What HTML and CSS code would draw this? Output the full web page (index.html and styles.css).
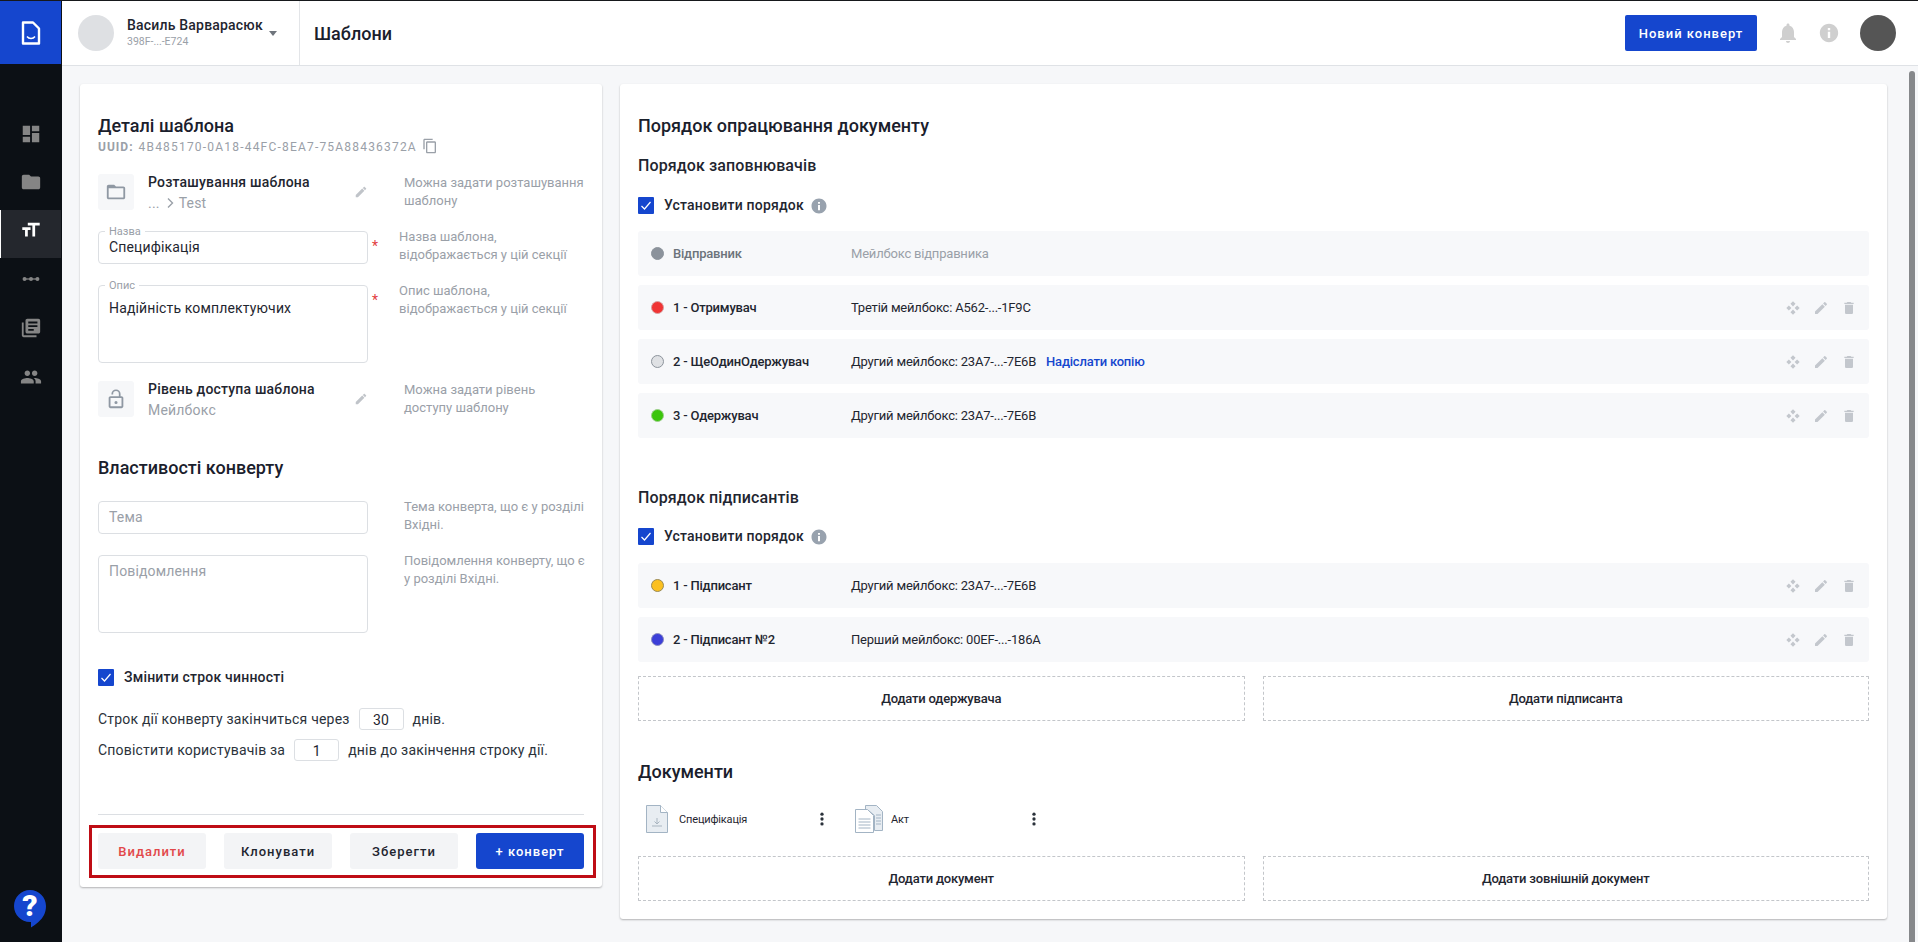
FILE: index.html
```html
<!DOCTYPE html>
<html lang="uk">
<head>
<meta charset="utf-8">
<title>Шаблони</title>
<link rel="stylesheet" href="styles.css">
</head>
<body>
<svg class="defs" width="0" height="0" aria-hidden="true">
  <symbol id="i-edit" viewBox="0 0 24 24"><path d="M3 17.25V21h3.75L17.81 9.94l-3.75-3.75L3 17.25zM20.71 7.04c.39-.39.39-1.02 0-1.41l-2.34-2.34c-.39-.39-1.02-.39-1.41 0l-1.83 1.83 3.75 3.75 1.83-1.83z"/></symbol>
  <symbol id="i-delete" viewBox="0 0 24 24"><path d="M6 19c0 1.1.9 2 2 2h8c1.1 0 2-.9 2-2V7H6v12zM19 4h-3.5l-1-1h-5l-1 1H5v2h14V4z"/></symbol>
  <symbol id="i-move" viewBox="0 0 24 24"><path d="M12 2l3.800 3.800L12 9.600 8.200 5.800zM12 14.400l3.800 3.800L12 22l-3.800-3.800zM5.800 8.200L9.600 12l-3.800 3.800L2 12zM18.200 8.200L22 12l-3.800 3.800L14.400 12z"/></symbol>
  <symbol id="i-info" viewBox="0 0 24 24"><path d="M12 2C6.480 2 2 6.480 2 12s4.480 10 10 10 10-4.480 10-10S17.520 2 12 2zm1.300 15.500h-2.600v-6.800h2.600v6.800zm0-8.600h-2.600V6.500h2.600v2.400z"/></symbol>
  <symbol id="i-more" viewBox="0 0 24 24"><circle cx="12" cy="5.500" r="2.200"/><circle cx="12" cy="12" r="2.200"/><circle cx="12" cy="18.500" r="2.200"/></symbol>
  <symbol id="i-check" viewBox="0 0 16 16"><path d="M3.500 8.500l3 3 6-7" fill="none" stroke="#fff" stroke-width="1.200"/></symbol>
</svg>

<div class="app">
  <nav class="sidebar">
    <a class="logo">
      <svg width="24" height="28" viewBox="0 0 24 28"><path d="M4 3.500h10l6 6v15H4z" fill="none" stroke="#fff" stroke-width="2.400" stroke-linejoin="round"/><path d="M8 17.500c2 2.600 6 2.600 8 0" fill="none" stroke="#fff" stroke-width="1.500"/></svg>
    </a>
    <ul class="nav-list">
      <li class="nav-item"><svg class="nav-icon" viewBox="0 0 24 24"><path d="M3 13h8V3H3v10zm0 8h8v-6H3v6zm10 0h8V11h-8v10zm0-18v6h8V3h-8z"/></svg></li>
      <li class="nav-item"><svg class="nav-icon" viewBox="0 0 24 24"><path d="M10 4H4c-1.100 0-1.990.9-1.990 2L2 18c0 1.100.9 2 2 2h16c1.100 0 2-.9 2-2V8c0-1.100-.9-2-2-2h-8l-2-2z"/></svg></li>
      <li class="nav-item nav-active"><svg class="nav-icon" viewBox="0 0 24 24"><path fill="#fff" d="M21.500 4v3h-5v12h-3V7h-5V4h13zm-19 5h9v3h-3v7h-3v-7h-3V9z"/></svg></li>
      <li class="nav-item"><svg class="nav-icon" viewBox="0 0 24 24"><circle cx="5" cy="12" r="2.200"/><circle cx="12" cy="12" r="2.200"/><circle cx="19" cy="12" r="2.200"/><path d="M5 11.300h14v1.400H5z"/></svg></li>
      <li class="nav-item"><svg class="nav-icon" viewBox="0 0 24 24"><path d="M4 6H2v14c0 1.100.9 2 2 2h14v-2H4V6zm16-4H8c-1.100 0-2 .9-2 2v12c0 1.100.9 2 2 2h12c1.100 0 2-.9 2-2V4c0-1.100-.9-2-2-2zm-1 9H9V9h10v2zm-4 4H9v-2h6v2zm4-8H9V5h10v2z"/></svg></li>
      <li class="nav-item"><svg class="nav-icon" viewBox="0 0 24 24"><path d="M16 11c1.660 0 2.990-1.340 2.990-3S17.660 5 16 5c-1.660 0-3 1.340-3 3s1.340 3 3 3zm-8 0c1.660 0 2.990-1.340 2.990-3S9.660 5 8 5C6.340 5 5 6.340 5 8s1.340 3 3 3zm0 2c-2.330 0-7 1.170-7 3.500V19h14v-2.500c0-2.330-4.670-3.500-7-3.500zm8 0c-.29 0-.62.02-.97.05 1.160.84 1.970 1.970 1.970 3.450V19h6v-2.500c0-2.330-4.670-3.500-7-3.500z"/></svg></li>
    </ul>
    <a class="help-bubble">
      <svg class="help-shape" width="32" height="38" viewBox="0 0 32 38"><path d="M16 0C7.200 0 0 7.200 0 16s7.200 16 16 16h1v5.500c5-3 10.500-7.500 13-12.500 1.300-2.700 2-5.800 2-9C32 7.200 24.800 0 16 0z" fill="#1546ce"/></svg>
      <span class="help-mark">?</span>
    </a>
  </nav>

  <div class="main">
    <header class="topbar">
      <div class="account">
        <span class="account-avatar"></span>
        <div class="account-text">
          <div class="account-name">Василь Варварасюк</div>
          <div class="account-id">398F-...-E724</div>
        </div>
        <span class="caret"></span>
      </div>
      <h1 class="page-title">Шаблони</h1>
      <button class="btn-primary btn-new">Новий конверт</button>
      <svg class="top-icon bell" viewBox="0 0 24 24"><path d="M12 22c1.100 0 2-.9 2-2h-4c0 1.100.89 2 2 2zm6-6v-5c0-3.070-1.640-5.640-4.500-6.320V4c0-.83-.67-1.500-1.500-1.500s-1.500.67-1.500 1.500v.68C7.630 5.360 6 7.920 6 11v5l-2 2v1h16v-1l-2-2z"/></svg>
      <svg class="top-icon info-top"><use href="#i-info"/></svg>
      <span class="user-avatar"></span>
    </header>

    <div class="content">
      <section class="card card-left">
        <h2 class="card-title">Деталі шаблона</h2>
        <div class="uuid"><b>UUID:</b><span>4B485170-0A18-44FC-8EA7-75A88436372A</span><svg class="copy-icon" viewBox="0 0 24 24"><path d="M16 1H4c-1.100 0-2 .9-2 2v14h2V3h12V1zm3 4H8c-1.100 0-2 .9-2 2v14c0 1.100.9 2 2 2h11c1.100 0 2-.9 2-2V7c0-1.100-.9-2-2-2zm0 16H8V7h11v14z"/></svg></div>

        <div class="info-row row-location">
          <span class="square-icon"><svg viewBox="0 0 24 24"><path d="M20 6h-8l-2-2H4c-1.100 0-1.990.9-1.990 2L2 18c0 1.100.9 2 2 2h16c1.100 0 2-.9 2-2V8c0-1.100-.9-2-2-2zm0 12H4V8h16v10z"/></svg></span>
          <div class="info-text">
            <div class="info-title">Розташування шаблона</div>
            <div class="info-sub"><span class="crumb">...</span><svg class="crumb-sep" viewBox="0 0 8 12"><path d="M2 1.500L6.500 6 2 10.500" fill="none" stroke="#9aa0a8" stroke-width="1.400"/></svg><span>Test</span></div>
          </div>
          <svg class="pen-left"><use href="#i-edit"/></svg>
          <p class="hint hint-wide">Можна задати розташування шаблону</p>
        </div>

        <div class="field-row row-name">
          <div class="field field-input"><span class="field-label">Назва</span><span class="field-value">Специфікація</span></div>
          <span class="star">*</span>
          <p class="hint">Назва шаблона, відображається у цій секції</p>
        </div>

        <div class="field-row row-desc">
          <div class="field field-area"><span class="field-label">Опис</span><span class="field-value">Надійність комплектуючих</span></div>
          <span class="star">*</span>
          <p class="hint">Опис шаблона, відображається у цій секції</p>
        </div>

        <div class="info-row row-access">
          <span class="square-icon"><svg viewBox="0 0 24 24"><path d="M12 17.500a1.700 1.700 0 1 0 0-3.400 1.700 1.700 0 0 0 0 3.400zM18 9h-1V6.500a5 5 0 0 0-10 0V7h1.900v-.5a3.100 3.100 0 0 1 6.200 0V9H6c-1.100 0-2 .9-2 2v9c0 1.100.9 2 2 2h12c1.100 0 2-.9 2-2v-9c0-1.100-.9-2-2-2zm0 11H6v-9h12v9z"/></svg></span>
          <div class="info-text">
            <div class="info-title">Рівень доступа шаблона</div>
            <div class="info-sub">Мейлбокс</div>
          </div>
          <svg class="pen-left"><use href="#i-edit"/></svg>
          <p class="hint hint-wide">Можна задати рівень доступу шаблону</p>
        </div>

        <h2 class="card-title title-props">Властивості конверту</h2>

        <div class="field-row row-subject">
          <div class="field field-input"><span class="field-placeholder">Тема</span></div>
          <p class="hint hint-far">Тема конверта, що є у розділі Вхідні.</p>
        </div>
        <div class="field-row row-message">
          <div class="field field-area"><span class="field-placeholder">Повідомлення</span></div>
          <p class="hint hint-far">Повідомлення конверту, що є у розділі Вхідні.</p>
        </div>

        <label class="check-row row-expire"><span class="checkbox"><svg><use href="#i-check"/></svg></span><span class="check-label">Змінити строк чинності</span></label>
        <div class="term-line term-first"><span>Строк дії конверту закінчиться через</span><span class="num-box">30</span><span>днів.</span></div>
        <div class="term-line"><span>Сповістити користувачів за</span><span class="num-box">1</span><span>днів до закінчення строку дії.</span></div>

        <hr class="divider">
        <div class="actions">
          <button class="btn btn-danger">Видалити</button>
          <button class="btn">Клонувати</button>
          <button class="btn">Зберегти</button>
          <button class="btn btn-primary">+ конверт</button>
        </div>
      </section>

      <section class="card card-right">
        <h2 class="card-title">Порядок опрацювання документу</h2>
        <h3 class="sub-title">Порядок заповнювачів</h3>
        <label class="check-row order-check"><span class="checkbox"><svg><use href="#i-check"/></svg></span><span class="check-label">Установити порядок</span><svg class="order-info"><use href="#i-info"/></svg></label>
        <ul class="party-list">
          <li class="party party-muted"><span class="dot dot-gray"></span><span class="party-name">Відправник</span><span class="party-box">Мейлбокс відправника</span></li>
          <li class="party"><span class="dot dot-red"></span><span class="party-name">1 - Отримувач</span><span class="party-box">Третій мейлбокс: A562-...-1F9C</span><span class="tools"><svg><use href="#i-move"/></svg><svg><use href="#i-edit"/></svg><svg><use href="#i-delete"/></svg></span></li>
          <li class="party"><span class="dot dot-light"></span><span class="party-name">2 - ЩеОдинОдержувач</span><span class="party-box">Другий мейлбокс: 23A7-...-7E6B</span><a class="party-link">Надіслати копію</a><span class="tools"><svg><use href="#i-move"/></svg><svg><use href="#i-edit"/></svg><svg><use href="#i-delete"/></svg></span></li>
          <li class="party"><span class="dot dot-green"></span><span class="party-name">3 - Одержувач</span><span class="party-box">Другий мейлбокс: 23A7-...-7E6B</span><span class="tools"><svg><use href="#i-move"/></svg><svg><use href="#i-edit"/></svg><svg><use href="#i-delete"/></svg></span></li>
        </ul>

        <h3 class="sub-title title-signers">Порядок підписантів</h3>
        <label class="check-row order-check"><span class="checkbox"><svg><use href="#i-check"/></svg></span><span class="check-label">Установити порядок</span><svg class="order-info"><use href="#i-info"/></svg></label>
        <ul class="party-list party-list-signers">
          <li class="party"><span class="dot dot-yellow"></span><span class="party-name">1 - Підписант</span><span class="party-box">Другий мейлбокс: 23A7-...-7E6B</span><span class="tools"><svg><use href="#i-move"/></svg><svg><use href="#i-edit"/></svg><svg><use href="#i-delete"/></svg></span></li>
          <li class="party"><span class="dot dot-blue"></span><span class="party-name">2 - Підписант №2</span><span class="party-box">Перший мейлбокс: 00EF-...-186A</span><span class="tools"><svg><use href="#i-move"/></svg><svg><use href="#i-edit"/></svg><svg><use href="#i-delete"/></svg></span></li>
        </ul>
        <div class="dashed-row dashed-people">
          <div class="dashed">Додати одержувача</div>
          <div class="dashed">Додати підписанта</div>
        </div>

        <h2 class="card-title title-docs">Документи</h2>
        <div class="doc-list">
          <div class="doc">
            <svg class="doc-icon" width="28" height="28" viewBox="0 0 28 28"><path d="M3.500.5h14l7 7v20h-21z" fill="#e8edf2" stroke="#a3b4c4"/><path d="M17.500.5v7h7" fill="#fff" stroke="#a3b4c4"/><path d="M14 13v6m-2.500-2.500L14 19l2.500-2.500M9 21h10" fill="none" stroke="#a9b5c0"/></svg>
            <span class="doc-name">Специфікація</span>
            <svg class="doc-more"><use href="#i-more"/></svg>
          </div>
          <div class="doc">
            <svg class="doc-icon" width="28" height="28" viewBox="0 0 28 28"><path d="M10.500.5h11l6 6v19h-8v-15l-6-5h-3z" fill="#e8edf2" stroke="#a3b4c4"/><path d="M.5 4.500h12l6 6v17H.5z" fill="#fff" stroke="#a3b4c4"/><path d="M3.500 14h12M3.500 17h12M3.500 20h12M3.500 23h12M21 10h5M21 13h5M21 16h5M21 19h5" stroke="#a3b4c4"/></svg>
            <span class="doc-name">Акт</span>
            <svg class="doc-more"><use href="#i-more"/></svg>
          </div>
        </div>
        <div class="dashed-row">
          <div class="dashed">Додати документ</div>
          <div class="dashed">Додати зовнішній документ</div>
        </div>
      </section>
      <span class="scroll-thumb"></span>
    </div>
  </div>
</div>
</body>
</html>
```

FILE: styles.css
```css
* { box-sizing: border-box; }
html, body { height: 100%; }
body {
  margin: 0;
  overflow: hidden;
  border-top: 1px solid #16181b;
  background: #f6f7f9;
  color: #1a202c;
  font-family: Roboto, "Noto Sans", sans-serif;
  font-size: 13px;
}
h1, h2, h3, p, ul { margin: 0; padding: 0; }
ul { list-style: none; }
button { font-family: inherit; border: 0; cursor: pointer; }
.defs { position: absolute; }

.app { display: flex; height: 941px; }

/* sidebar */
.sidebar {
  width: 62px;
  flex: none;
  display: flex;
  flex-direction: column;
  background: #0c1015;
  position: relative;
}
.logo {
  width: 61px;
  height: 63px;
  background: #1546ce;
  display: flex;
  align-items: center;
  justify-content: center;
}
.nav-list { margin-top: 46px; }
.nav-item {
  width: 61px;
  height: 48px;
  display: flex;
  align-items: center;
  justify-content: center;
}
.nav-icon { width: 22px; height: 22px; fill: #858585; }
.nav-active {
  margin-top: 4px;
  padding-bottom: 8px;
  background: #24272d;
  border-left: 1px solid #fff;
}
.nav-active ~ .nav-item { margin-top: 1px; }
.nav-active + .nav-item { margin-top: -3px; }
.help-bubble {
  position: absolute;
  left: 14px;
  top: 889px;
  width: 32px;
  height: 38px;
}
.help-shape { display: block; }
.help-mark {
  position: absolute;
  left: 0;
  right: 0;
  top: 1px;
  text-align: center;
  color: #fff;
  font-size: 30px;
  line-height: 30px;
  font-weight: 900;
}

/* top bar */
.main { flex: 1; min-width: 0; display: flex; flex-direction: column; }
.topbar {
  height: 65px;
  flex: none;
  background: #fff;
  border-bottom: 1px solid #dfe2e6;
  display: flex;
  align-items: center;
}
.account {
  width: 238px;
  height: 64px;
  flex: none;
  display: flex;
  align-items: center;
  padding-left: 16px;
  border-right: 1px solid #e3e5e8;
}
.account-avatar {
  width: 36px;
  height: 36px;
  border-radius: 50%;
  background: #dee0e3;
  flex: none;
}
.account-text { margin: -2px 0 0 13px; }
.account-name { font-size: 14px; font-weight: 500; line-height: 18px; letter-spacing: 0.2px; color: #1f2630; }
.account-id { font-size: 10.500px; line-height: 14px; margin-top: 1px; color: #9aa0a8; }
.caret {
  margin-left: 6px;
  border-left: 4.500px solid transparent;
  border-right: 4.500px solid transparent;
  border-top: 5px solid #6f757c;
}
.page-title { margin-left: 14px; font-size: 18px; font-weight: 500; color: #1a202c; flex: 1; }
.btn-new {
  width: 132px;
  height: 36px;
  flex: none;
  border-radius: 2px;
  font-size: 13px;
  font-weight: 500;
  letter-spacing: 1px;
}
.top-icon { fill: #cfcfcf; flex: none; }
.bell { width: 24px; height: 24px; margin-left: 19px; }
.info-top { width: 22px; height: 22px; margin-left: 18px; }
.user-avatar {
  width: 36px;
  height: 36px;
  margin-left: 20px;
  margin-right: 22px;
  border-radius: 50%;
  background: #555;
  flex: none;
}

/* content */
.content {
  flex: 1;
  display: flex;
  align-items: flex-start;
  gap: 18px;
  padding: 18px 0 0 18px;
  position: relative;
}
.scroll-thumb {
  position: absolute;
  right: 3px;
  top: 5px;
  bottom: 0;
  width: 6px;
  border-radius: 3px 3px 0 0;
  background: #86888b;
}
.card {
  background: #fff;
  border-radius: 3px;
  box-shadow: 0 1px 2px rgba(0, 0, 0, 0.28);
  padding: 31px 18px 0;
}
.card-left { width: 522px; height: 803px; }
.card-right { width: 1267px; height: 835px; }
.card-title { font-size: 18px; line-height: 22px; font-weight: 500; color: #1a202c; }

/* left card */
.uuid {
  margin-top: 2px;
  height: 16px;
  display: flex;
  align-items: center;
  gap: 5px;
  font-size: 12px;
  letter-spacing: 1.200px;
  color: #9aa0a8;
  white-space: nowrap;
}
.uuid b { font-weight: 700; letter-spacing: 1px; }
.copy-icon { width: 16px; height: 16px; fill: #9aa0a8; flex: none; margin-top: -2px; }

.info-row { display: flex; align-items: flex-start; height: 36px; position: relative; }
.row-location { margin-top: 19px; }
.row-access { margin-top: 18px; }
.square-icon {
  width: 36px;
  height: 36px;
  flex: none;
  border-radius: 3px;
  background: #f6f7f9;
  display: flex;
  align-items: center;
  justify-content: center;
}
.square-icon svg { width: 22px; height: 22px; fill: #8f98a3; }
.info-text { margin-left: 14px; width: 206px; flex: none; }
.info-title { font-size: 14px; font-weight: 500; line-height: 18px; letter-spacing: 0.2px; margin-top: -1px; color: #1f2630; }
.info-sub {
  font-size: 14px;
  line-height: 18px;
  letter-spacing: 0.2px;
  margin-top: 3px;
  color: #9aa0a8;
  display: flex;
  align-items: center;
}
.crumb-sep { width: 8px; height: 12px; margin: 0 5px 0 6px; flex: none; }
.pen-left { width: 14px; height: 14px; fill: #c0c4c9; flex: none; margin-top: 11px; }
.hint {
  font-size: 13px;
  line-height: 18px;
  color: #9aa0a8;
  width: 186px;
  flex: none;
  margin-left: 25px;
}
.info-row .hint { margin-left: 36px; margin-top: 0; }
.hint-wide { width: 181.500px; }

.title-props { margin-top: 40px; }
.field-row { display: flex; align-items: flex-start; }
.row-name { margin-top: 21px; }
.row-desc { margin-top: 21px; }
.row-subject { margin-top: 22px; }
.row-message { margin-top: 21px; }
.field {
  width: 270px;
  flex: none;
  position: relative;
  border: 1px solid #dcdfe3;
  border-radius: 4px;
  padding: 0 10px;
  font-size: 14px;
}
.field-input { height: 33px; }
.field-area { height: 78px; }
.field-label {
  position: absolute;
  left: 6px;
  top: -6px;
  padding: 0 4px;
  background: #fff;
  font-size: 11px;
  line-height: 12px;
  color: #9aa0a8;
}
.field-value { display: block; color: #1f2630; line-height: 18px; letter-spacing: 0.15px; }
.field-input .field-value { margin-top: 6px; }
.field-area .field-value { margin-top: 13px; }
.field-placeholder { display: block; color: #9aa0a8; font-size: 14px; line-height: 18px; letter-spacing: 0.15px; margin-top: 6px; }
.star { color: #e2403f; font-size: 14px; width: 7px; margin-left: 4px; margin-top: 6px; line-height: 18px; }
.row-name .hint, .row-desc .hint { margin-top: -3px; margin-left: 21px; }
.hint-far { margin-left: 36px; margin-top: -3px; width: 184px; }

.check-row { display: flex; align-items: center; }
.checkbox {
  width: 16px;
  height: 17px;
  flex: none;
  background: #1546ce;
  border-radius: 1px;
  display: block;
}
.checkbox svg { width: 16px; height: 17px; display: block; }
.check-label { font-size: 14px; font-weight: 500; letter-spacing: 0.2px; margin-left: 10px; color: #1f2630; line-height: 17px; }
.row-expire { margin-top: 36px; }

.term-line {
  font-size: 14px;
  height: 22px;
  line-height: 20px;
  letter-spacing: 0.2px;
  color: #2b323b;
  margin-top: 9px;
  display: flex;
  align-items: center;
  white-space: nowrap;
}
.term-first { margin-top: 22px; }
.num-box {
  width: 45px;
  height: 22px;
  margin: 0 9px;
  border: 1px solid #dcdfe3;
  border-radius: 3px;
  text-align: center;
  font-size: 14px;
  line-height: 22px;
  color: #1f2630;
  flex: none;
}
.divider { margin: 53px 0 0; border: 0; border-top: 1px solid #dcdfe3; height: 1px; }
.actions {
  margin: 10px -12px 0 -9px;
  height: 53px;
  padding: 5px 9px 0 6px;
  border: 3px solid #bf0d15;
  display: flex;
  justify-content: space-between;
}
.btn {
  width: 108px;
  height: 36px;
  border-radius: 3px;
  background: #f3f4f6;
  color: #1f2630;
  font-size: 13px;
  font-weight: 500;
  letter-spacing: 1px;
}
.btn-danger { color: #e2484a; }
.btn-primary { background: #1546ce; color: #fff; }

/* right card */
.sub-title { font-size: 16px; line-height: 20px; font-weight: 500; letter-spacing: 0.12px; color: #1f2630; margin-top: 19px; }
.order-check { margin-top: 21px; height: 17px; }
.order-info { width: 18px; height: 18px; fill: #98a2ae; margin-left: 6px; flex: none; }
.party-list { margin-top: 17px; display: flex; flex-direction: column; gap: 9px; }
.party-list-signers { margin-top: 18px; }
.party {
  height: 45px;
  display: flex;
  align-items: center;
  border-radius: 3px;
  background: #f7f8fa;
  padding-left: 13px;
  font-size: 13px;
  letter-spacing: -0.2px;
  color: #1f2630;
}
.dot {
  width: 13px;
  height: 13px;
  flex: none;
  border-radius: 50%;
  border: 1px solid #8d949c;
}
.dot-gray { background: #8b929b; }
.dot-red { background: #f03434; border-color: #d8a0a0; }
.dot-light { background: #dfe1e4; }
.dot-green { background: #3cc50c; border-color: #9ccf8a; }
.dot-yellow { background: #fbc020; border-color: #9a8a55; }
.dot-blue { background: #3c3fd8; border-color: #8a8cc0; }
.party-name { margin-left: 9px; width: 178px; flex: none; font-weight: 500; }
.party-box { white-space: nowrap; }
.party-muted .party-name { color: #6c737b; }
.party-muted .party-box { color: #9aa0a8; }
.party-link { margin-left: 10px; color: #1546ce; font-weight: 500; }
.tools { margin-left: auto; margin-right: 12px; display: flex; align-items: center; gap: 12px; }
.tools svg { width: 16px; height: 16px; fill: #c3c7cd; display: block; }
.title-signers { margin-top: 50px; }
.title-signers + .order-check { margin-top: 20px; }
.dashed-row { display: flex; gap: 18px; }
.dashed {
  flex: 1;
  height: 45px;
  display: flex;
  align-items: center;
  justify-content: center;
  border: 1px dashed #c3c6ca;
  border-radius: 1px;
  font-size: 13px;
  font-weight: 500;
  letter-spacing: -0.2px;
  color: #1f2630;
}
.dashed-people { margin-top: 14px; }
.title-docs { margin-top: 40px; }
.doc-list { display: flex; margin-top: 22px; height: 28px; margin-bottom: 23px; }
.doc { width: 212px; display: flex; align-items: center; padding-left: 5px; }
.doc-icon { flex: none; }
.doc-name { margin-left: 8px; font-size: 11px; letter-spacing: -0.15px; color: #1f2630; flex: 1; }
.doc-more { width: 18px; height: 18px; fill: #2b323b; flex: none; margin-right: 19px; }
```
